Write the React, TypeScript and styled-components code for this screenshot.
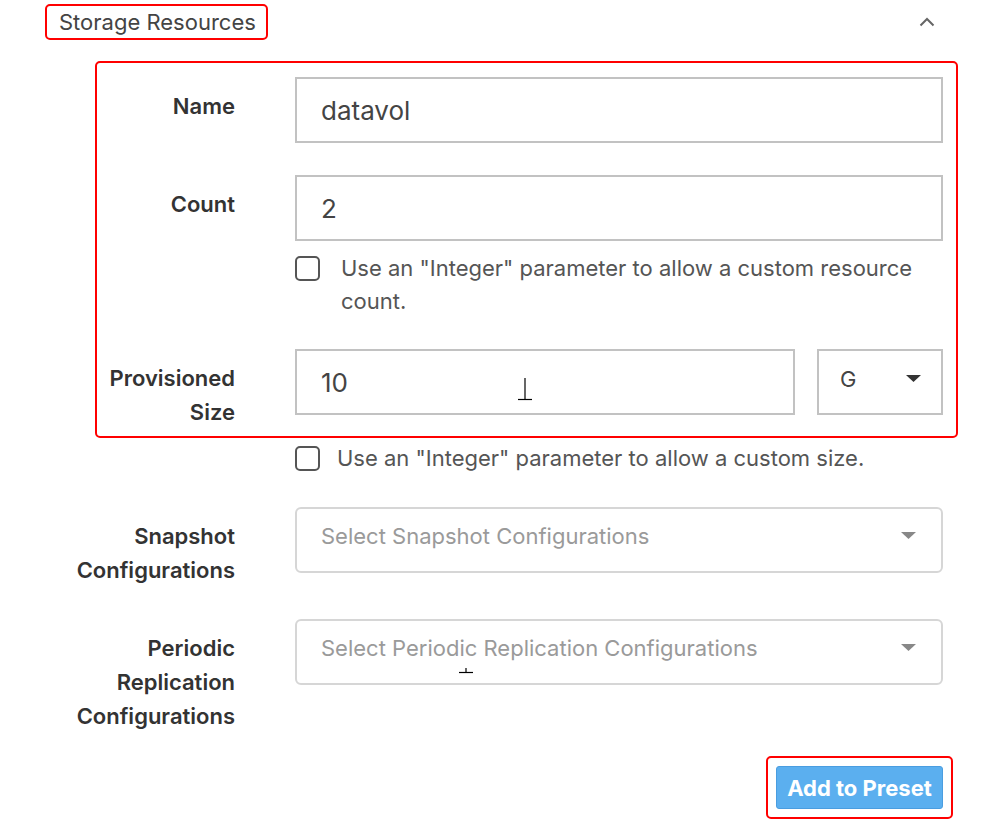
import React from 'react';
import styled, { createGlobalStyle } from 'styled-components';

const GlobalStyle = createGlobalStyle`
  html, body {
    margin: 0;
    padding: 0;
    background: #fff;
  }
  body {
    font-family: Inter, "Noto Sans", sans-serif;
    color: #333;
  }
`;

const Page = styled.div`
  padding: 4px 0 0 45px;
  width: 913px;
`;

const TitleRow = styled.div`
  display: flex;
  align-items: center;
  justify-content: space-between;
`;

const TitleBox = styled.div`
  height: 32px;
  display: flex;
  align-items: center;
  padding: 0 10px 0 12px;
  border: 2px solid #f00;
  border-radius: 5px;
  font-size: 22px;
  color: #444;
`;

const Chevron = styled.svg`
  width: 16px;
  height: 10px;
  margin-right: 23px;
`;

const Section = styled.div<{ $highlight?: boolean; $top: number }>`
  margin: ${p => p.$top}px 0 0 50px;
  border: 2px solid ${p => (p.$highlight ? '#f00' : 'transparent')};
  border-radius: 5px;
  padding: ${p => (p.$highlight ? '14px 13px 7px 0' : '2px 13px 0 0')};
  box-sizing: border-box;
  width: 863px;
`;

const FieldRow = styled.div<{ $top?: number }>`
  display: grid;
  grid-template-columns: 138px 648px;
  column-gap: 60px;
  margin-top: ${p => p.$top || 0}px;
`;

// labels may run past the left edge of the frame, as in the original
const Label = styled.div`
  margin-left: -50px;
  text-align: right;
  padding-top: 12px;
  font-size: 22px;
  font-weight: 600;
  line-height: 34px;
  color: #333;
  white-space: nowrap;
`;

const Control = styled.div`
  position: relative;
  min-width: 0;
`;

const TextBox = styled.div<{ $width?: number }>`
  height: 66px;
  width: ${p => (p.$width ? `${p.$width}px` : '100%')};
  box-sizing: border-box;
  border: 2px solid #c2c2c2;
  padding: 0 24px;
  display: flex;
  align-items: center;
  font-size: 26px;
  color: #444;
`;

const Inline = styled.div`
  display: flex;
  gap: 22px;
`;

const UnitSelect = styled.div`
  position: relative;
  flex: 1;
  height: 66px;
  box-sizing: border-box;
  border: 2px solid #c2c2c2;
  display: flex;
  align-items: center;
  justify-content: space-between;
  padding: 0 20px 6px 21px;
  font-size: 22px;
  color: #444;
`;

const DropSelect = styled.div`
  position: relative;
  height: 66px;
  box-sizing: border-box;
  border: 2px solid #d6d6d6;
  border-radius: 6px;
  display: flex;
  align-items: center;
  justify-content: space-between;
  padding: 0 25px 8px 24px;
  font-size: 22px;
  color: #9a9a9a;
`;

const Caret = styled.svg`
  width: 15px;
  height: 8px;
  flex-shrink: 0;
`;

const CheckLine = styled.label<{ $gap: number; $top?: number }>`
  display: flex;
  align-items: flex-start;
  gap: ${p => p.$gap}px;
  margin-top: ${p => p.$top || 0}px;
  font-size: 22px;
  line-height: 33px;
  color: #555;
`;

const Box = styled.span`
  flex-shrink: 0;
  width: 25px;
  height: 25px;
  margin-top: 4px;
  box-sizing: border-box;
  border: 2px solid #555;
  border-radius: 5px;
`;

const Cursor = styled.svg<{ $x: number; $y: number }>`
  position: absolute;
  left: ${p => p.$x}px;
  top: ${p => p.$y}px;
`;

const ButtonRow = styled.div`
  display: flex;
  justify-content: flex-end;
  margin: 23px -10px 0 0;
`;

const ButtonFrame = styled.div`
  border: 2px solid #f00;
  border-radius: 5px;
  padding: 8px;
`;

const PrimaryButton = styled.button`
  height: 43px;
  width: 167px;
  border: 1px solid #4a9de0;
  border-radius: 3px;
  background: #5bafef;
  color: #fff;
  font-family: inherit;
  font-size: 22px;
  font-weight: 700;
  padding: 0;
  cursor: pointer;
`;

const DownCaret = ({ color }: { color: string }) => (
  <Caret viewBox="0 0 15 8">
    <polygon points="0,0 15,0 7.5,7" fill={color} />
  </Caret>
);

export default function App() {
  return (
    <>
      <GlobalStyle />
      <Page>
        <TitleRow>
          <TitleBox>Storage Resources</TitleBox>
          <Chevron viewBox="0 0 16 10">
            <polyline points="1.5,8.5 8,2 14.5,8.5" fill="none" stroke="#666" strokeWidth="2" />
          </Chevron>
        </TitleRow>

        <Section $highlight $top={21}>
          <FieldRow>
            <Label>Name</Label>
            <Control>
              <TextBox>datavol</TextBox>
            </Control>
          </FieldRow>

          <FieldRow $top={32}>
            <Label>Count</Label>
            <Control>
              <TextBox>2</TextBox>
              <CheckLine $gap={21} $top={11}>
                <Box />
                <span>Use an "Integer" parameter to allow a custom resource count.</span>
              </CheckLine>
            </Control>
          </FieldRow>

          <FieldRow $top={31}>
            <Label>
              Provisioned
              <br />
              Size
            </Label>
            <Control>
              <Inline>
                <TextBox $width={500}>10</TextBox>
                <UnitSelect>
                  G
                  <DownCaret color="#333" />
                </UnitSelect>
              </Inline>
              <Cursor $x={222} $y={29} width="16" height="23" viewBox="0 0 16 23">
                <line x1="8" y1="0" x2="8" y2="21" stroke="#000" strokeWidth="1.2" />
                <line x1="1" y1="21.5" x2="15" y2="21.5" stroke="#000" strokeWidth="1.2" />
              </Cursor>
            </Control>
          </FieldRow>
        </Section>

        <Section $top={0}>
          <FieldRow>
            <div />
            <CheckLine $gap={17}>
              <Box />
              <span>Use an "Integer" parameter to allow a custom size.</span>
            </CheckLine>
          </FieldRow>

          <FieldRow $top={32}>
            <Label>
              Snapshot
              <br />
              Configurations
            </Label>
            <Control>
              <DropSelect>
                Select Snapshot Configurations
                <DownCaret color="#888" />
              </DropSelect>
            </Control>
          </FieldRow>

          <FieldRow $top={32}>
            <Label>
              Periodic
              <br />
              Replication
              <br />
              Configurations
            </Label>
            <Control>
              <DropSelect>
                Select Periodic Replication Configurations
                <DownCaret color="#888" />
              </DropSelect>
              <Cursor $x={164} $y={48} width="14" height="10" viewBox="0 0 14 10">
                <line x1="7" y1="1" x2="7" y2="5" stroke="#000" strokeWidth="1.2" />
                <line x1="0" y1="5.5" x2="14" y2="5.5" stroke="#000" strokeWidth="1.2" />
              </Cursor>
            </Control>
          </FieldRow>

          <ButtonRow>
            <ButtonFrame>
              <PrimaryButton>Add to Preset</PrimaryButton>
            </ButtonFrame>
          </ButtonRow>
        </Section>
      </Page>
    </>
  );
}
